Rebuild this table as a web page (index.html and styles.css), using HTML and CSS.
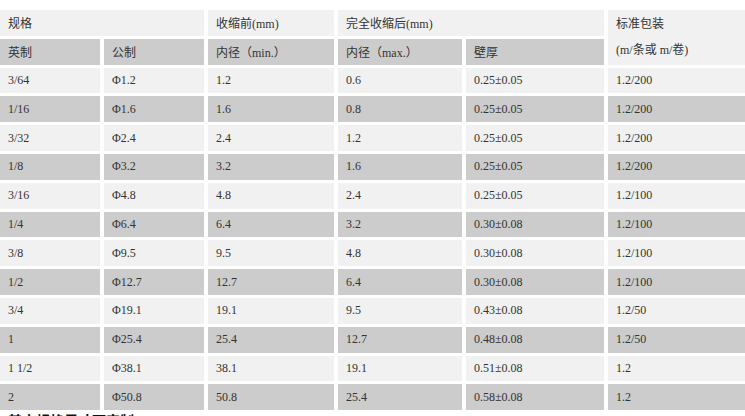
FILE: index.html
```html
<!DOCTYPE html>
<html lang="zh">
<head>
<meta charset="utf-8">
<link rel="stylesheet" href="styles.css">
</head>
<body>
<div class="spec">
  <div class="c light span2">规格</div>
  <div class="c light">收缩前(mm)</div>
  <div class="c light span2">完全收缩后(mm)</div>
  <div class="c light rows2"><span>标准包装</span><span>(m/条或 m/卷)</span></div>

  <div class="c dark">英制</div>
  <div class="c dark">公制</div>
  <div class="c dark">内径（min.）</div>
  <div class="c dark">内径（max.）</div>
  <div class="c dark">壁厚</div>

  <div class="c light">3/64</div><div class="c light">Φ1.2</div><div class="c light">1.2</div><div class="c light">0.6</div><div class="c light">0.25±0.05</div><div class="c light">1.2/200</div>
  <div class="c dark">1/16</div><div class="c dark">Φ1.6</div><div class="c dark">1.6</div><div class="c dark">0.8</div><div class="c dark">0.25±0.05</div><div class="c dark">1.2/200</div>
  <div class="c light">3/32</div><div class="c light">Φ2.4</div><div class="c light">2.4</div><div class="c light">1.2</div><div class="c light">0.25±0.05</div><div class="c light">1.2/200</div>
  <div class="c dark">1/8</div><div class="c dark">Φ3.2</div><div class="c dark">3.2</div><div class="c dark">1.6</div><div class="c dark">0.25±0.05</div><div class="c dark">1.2/200</div>
  <div class="c light">3/16</div><div class="c light">Φ4.8</div><div class="c light">4.8</div><div class="c light">2.4</div><div class="c light">0.25±0.05</div><div class="c light">1.2/100</div>
  <div class="c dark">1/4</div><div class="c dark">Φ6.4</div><div class="c dark">6.4</div><div class="c dark">3.2</div><div class="c dark">0.30±0.08</div><div class="c dark">1.2/100</div>
  <div class="c light">3/8</div><div class="c light">Φ9.5</div><div class="c light">9.5</div><div class="c light">4.8</div><div class="c light">0.30±0.08</div><div class="c light">1.2/100</div>
  <div class="c dark">1/2</div><div class="c dark">Φ12.7</div><div class="c dark">12.7</div><div class="c dark">6.4</div><div class="c dark">0.30±0.08</div><div class="c dark">1.2/100</div>
  <div class="c light">3/4</div><div class="c light">Φ19.1</div><div class="c light">19.1</div><div class="c light">9.5</div><div class="c light">0.43±0.08</div><div class="c light">1.2/50</div>
  <div class="c dark">1</div><div class="c dark">Φ25.4</div><div class="c dark">25.4</div><div class="c dark">12.7</div><div class="c dark">0.48±0.08</div><div class="c dark">1.2/50</div>
  <div class="c light">1 1/2</div><div class="c light">Φ38.1</div><div class="c light">38.1</div><div class="c light">19.1</div><div class="c light">0.51±0.08</div><div class="c light">1.2</div>
  <div class="c dark">2</div><div class="c dark">Φ50.8</div><div class="c dark">50.8</div><div class="c dark">25.4</div><div class="c dark">0.58±0.08</div><div class="c dark">1.2</div>
</div>
<p class="note">其它规格尺寸可定制</p>
</body>
</html>
```
FILE: styles.css
```css
html, body {
  margin: 0;
  padding: 0;
  background: #ffffff;
}
body {
  font-family: "Liberation Serif", "Noto Sans CJK SC", serif;
  font-size: 12px;
  color: #333333;
}
.spec {
  display: grid;
  grid-template-columns: 100px 100px 126px 124px 138px 137px;
  grid-auto-rows: 25.8px;
  column-gap: 4px;
  row-gap: 3px;
  padding-top: 10px;
}
.c {
  display: flex;
  align-items: center;
  padding-left: 8px;
  white-space: nowrap;
  overflow: hidden;
}
.light { background: #f1f1f1; }
.dark { background: #cccccc; }
.span2 { grid-column: span 2; }
.rows2 {
  grid-row: span 2;
  flex-direction: column;
  align-items: flex-start;
  justify-content: center;
  line-height: 26px;
}
.note {
  margin: 0;
  padding: 2px 0 0 8px;
  font-family: "Noto Sans CJK SC", sans-serif;
  font-weight: bold;
  font-size: 14px;
  line-height: 16px;
  color: #111111;
}
```
